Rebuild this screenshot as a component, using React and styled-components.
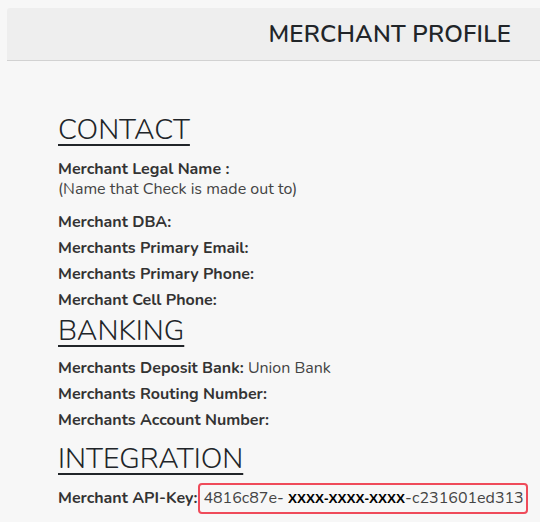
import React from "react";
import styled, { createGlobalStyle } from "styled-components";

const Global = createGlobalStyle`
  body {
    margin: 0;
    background: #f7f7f7;
    font-family: "Nunito", "Lato", "Open Sans", sans-serif;
    color: #333;
  }
`;

const Page = styled.div`
  padding: 8px 0 0 7px;
`;

const Header = styled.div`
  height: 52px;
  background: #eeeeee;
  border-bottom: 1px solid #d2d2d2;
  border-top-left-radius: 3px;
  display: flex;
  align-items: center;
  justify-content: flex-end;
  padding-right: 29px;
`;

const Title = styled.h1`
  margin: 0;
  font-size: 24px;
  font-weight: 600;
  color: #212529;
  letter-spacing: 0.2px;
`;

const Content = styled.div`
  padding: 50px 0 0 51px;
`;

const Heading = styled.h2`
  margin: ${(p) => p.$top || 0}px 0 0 0;
  font-size: 28.5px;
  font-weight: 300;
  color: #212529;
  text-decoration: underline;
  text-decoration-thickness: 2px;
  text-underline-offset: 5px;
  line-height: 38px;
`;

const List = styled.div`
  display: flex;
  flex-direction: column;
  gap: 6px;
  margin-top: ${(p) => p.$top || 8}px;
`;

const Row = styled.div`
  font-size: 16px;
  line-height: 20px;
  color: #333;
  white-space: nowrap;
  margin-bottom: ${(p) => p.$after || 0}px;
`;

const Label = styled.span`
  font-weight: 700;
`;

const Note = styled.div`
  color: #444;
`;

const Value = styled.span`
  color: #444;
`;

const KeyBox = styled.span`
  display: inline-block;
  border: 2px solid #ef4b5a;
  border-radius: 4px;
  padding: 3px 2px 3px 3px;
  margin-left: 1px;
  color: #444;
`;

const Masked = styled.span`
  color: #000;
  font-family: "Liberation Sans", Arial, sans-serif;
  font-size: 13.5px;
  font-weight: 700;
`;

export default function App() {
  return (
    <>
      <Global />
      <Page>
        <Header>
          <Title>MERCHANT PROFILE</Title>
        </Header>
        <Content>
          <Heading>CONTACT</Heading>
          <List $top={10}>
            <Row $after={7}>
              <Label>Merchant Legal Name :</Label>
              <Note>(Name that Check is made out to)</Note>
            </Row>
            <Row>
              <Label>Merchant DBA:</Label>
            </Row>
            <Row>
              <Label>Merchants Primary Email:</Label>
            </Row>
            <Row>
              <Label>Merchants Primary Phone:</Label>
            </Row>
            <Row>
              <Label>Merchant Cell Phone:</Label>
            </Row>
          </List>
          <Heading $top={2}>BANKING</Heading>
          <List>
            <Row>
              <Label>Merchants Deposit Bank:</Label> <Value>Union Bank</Value>
            </Row>
            <Row>
              <Label>Merchants Routing Number:</Label>
            </Row>
            <Row>
              <Label>Merchants Account Number:</Label>
            </Row>
          </List>
          <Heading $top={10}>INTEGRATION</Heading>
          <List $top={5}>
            <Row>
              <Label>Merchant API-Key:</Label>
              <KeyBox>
                4816c87e- <Masked>XXXX-XXXX-XXXX</Masked>-c231601ed313
              </KeyBox>
            </Row>
          </List>
        </Content>
      </Page>
    </>
  );
}
